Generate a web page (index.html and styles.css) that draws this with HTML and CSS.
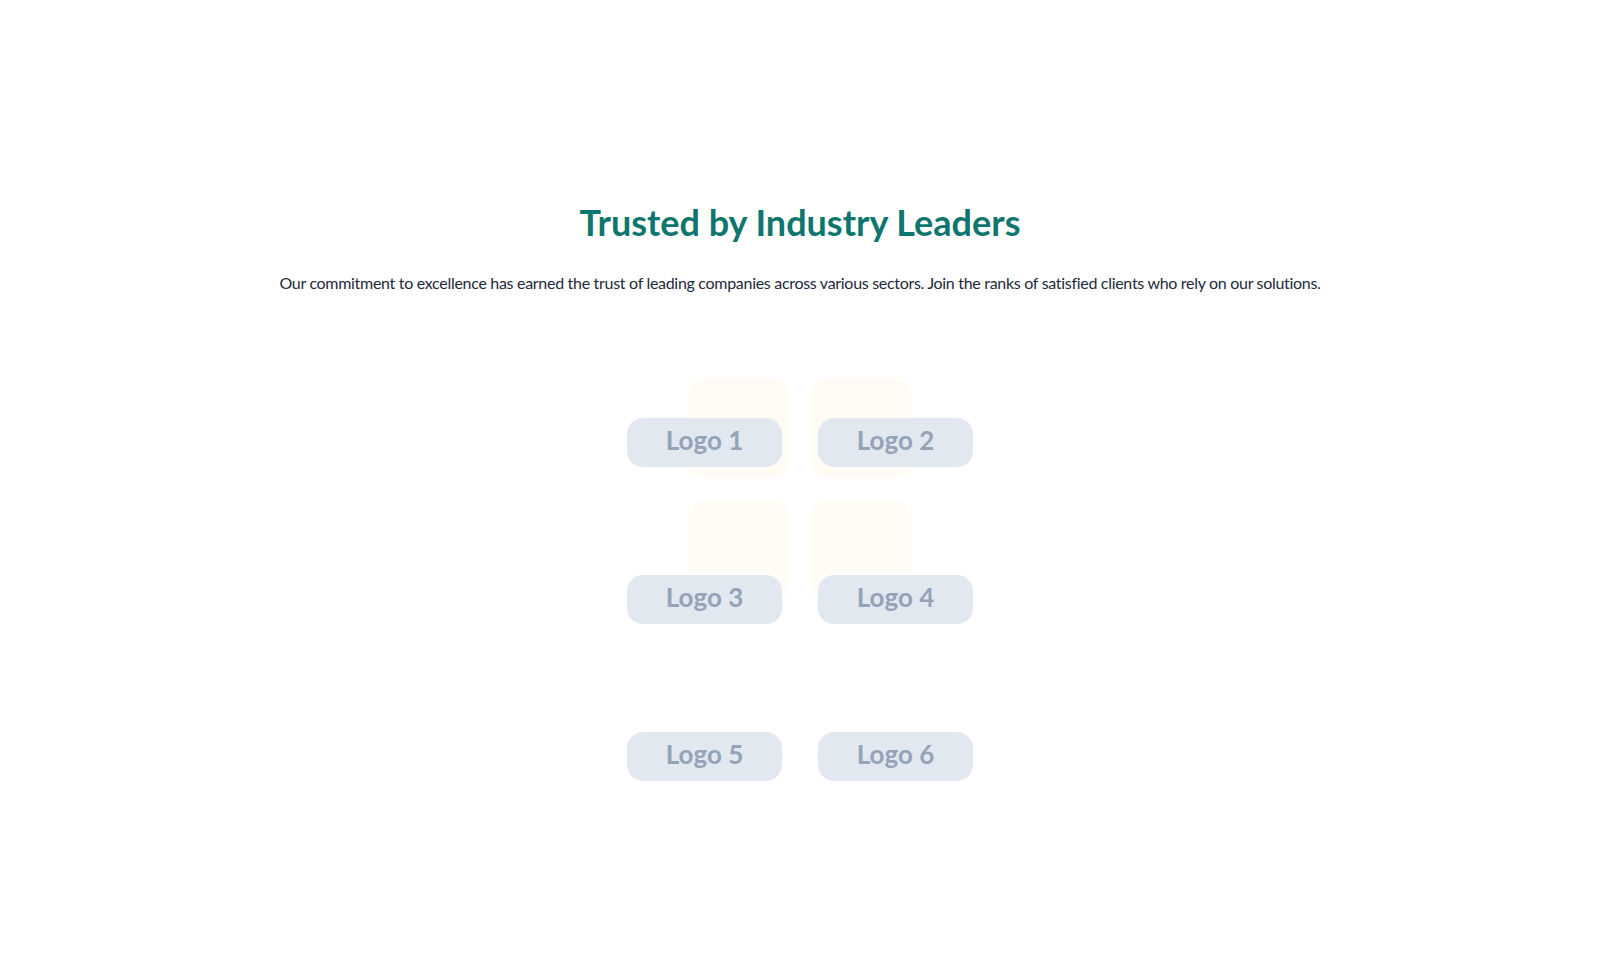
FILE: index.html
```html
<!DOCTYPE html>
<html lang="en">
<head>
<meta charset="utf-8">
<title>Trusted by Industry Leaders</title>
<link rel="stylesheet" href="styles.css">
</head>
<body>
  <section class="clients">
    <h1 class="clients-title">Trusted by Industry Leaders</h1>
    <p class="clients-lead">Our commitment to excellence has earned the trust of leading companies across various sectors. Join the ranks of satisfied clients who rely on our solutions.</p>

    <div class="logo-wall">
      <div class="logo-backdrop" aria-hidden="true">
        <span class="backdrop-tile"></span>
        <span class="backdrop-tile"></span>
        <span class="backdrop-tile"></span>
        <span class="backdrop-tile"></span>
      </div>
      <ul class="logo-grid">
        <li class="logo-pill">Logo 1</li>
        <li class="logo-pill">Logo 2</li>
        <li class="logo-pill">Logo 3</li>
        <li class="logo-pill">Logo 4</li>
        <li class="logo-pill">Logo 5</li>
        <li class="logo-pill">Logo 6</li>
      </ul>
    </div>
  </section>
</body>
</html>
```

FILE: styles.css
```css
* {
  box-sizing: border-box;
}

html,
body {
  margin: 0;
  padding: 0;
  background: #ffffff;
}

body {
  font-family: "Lato", "Inter", "Noto Sans", sans-serif;
  color: #1e293b;
}

.clients {
  padding-top: 202px;
  display: flex;
  flex-direction: column;
  align-items: center;
}

.clients-title {
  margin: 0;
  font-size: 36px;
  line-height: 40px;
  font-weight: 700;
  color: #0f766e;
  text-align: center;
}

.clients-lead {
  margin: 29px 0 0;
  font-size: 16px;
  line-height: 24px;
  letter-spacing: -0.3px;
  color: #1e293b;
  text-align: center;
}

/* Logo wall: pills sit on top of a faint 2x2 tile pattern */
.logo-wall {
  position: relative;
  margin-top: 123px;
  width: 346px;
}

.logo-backdrop {
  position: absolute;
  top: -40px;
  left: 62px;
  display: grid;
  grid-template-columns: 100px 100px;
  grid-auto-rows: 100px;
  gap: 22px;
  z-index: 0;
}

.backdrop-tile {
  display: block;
  background: #fefcf5;
  border-radius: 16px;
}

.logo-grid {
  position: relative;
  z-index: 1;
  list-style: none;
  margin: 0;
  padding: 0;
  display: grid;
  grid-template-columns: 155px 155px;
  column-gap: 36px;
  row-gap: 108px;
}

.logo-pill {
  height: 49px;
  padding-bottom: 6px;
  display: flex;
  align-items: center;
  justify-content: center;
  background: #e2e8f0;
  border-radius: 16px;
  font-family: "Lato", sans-serif;
  font-weight: 700;
  font-size: 26px;
  line-height: 30px;
  color: #94a3b8;
}
```
